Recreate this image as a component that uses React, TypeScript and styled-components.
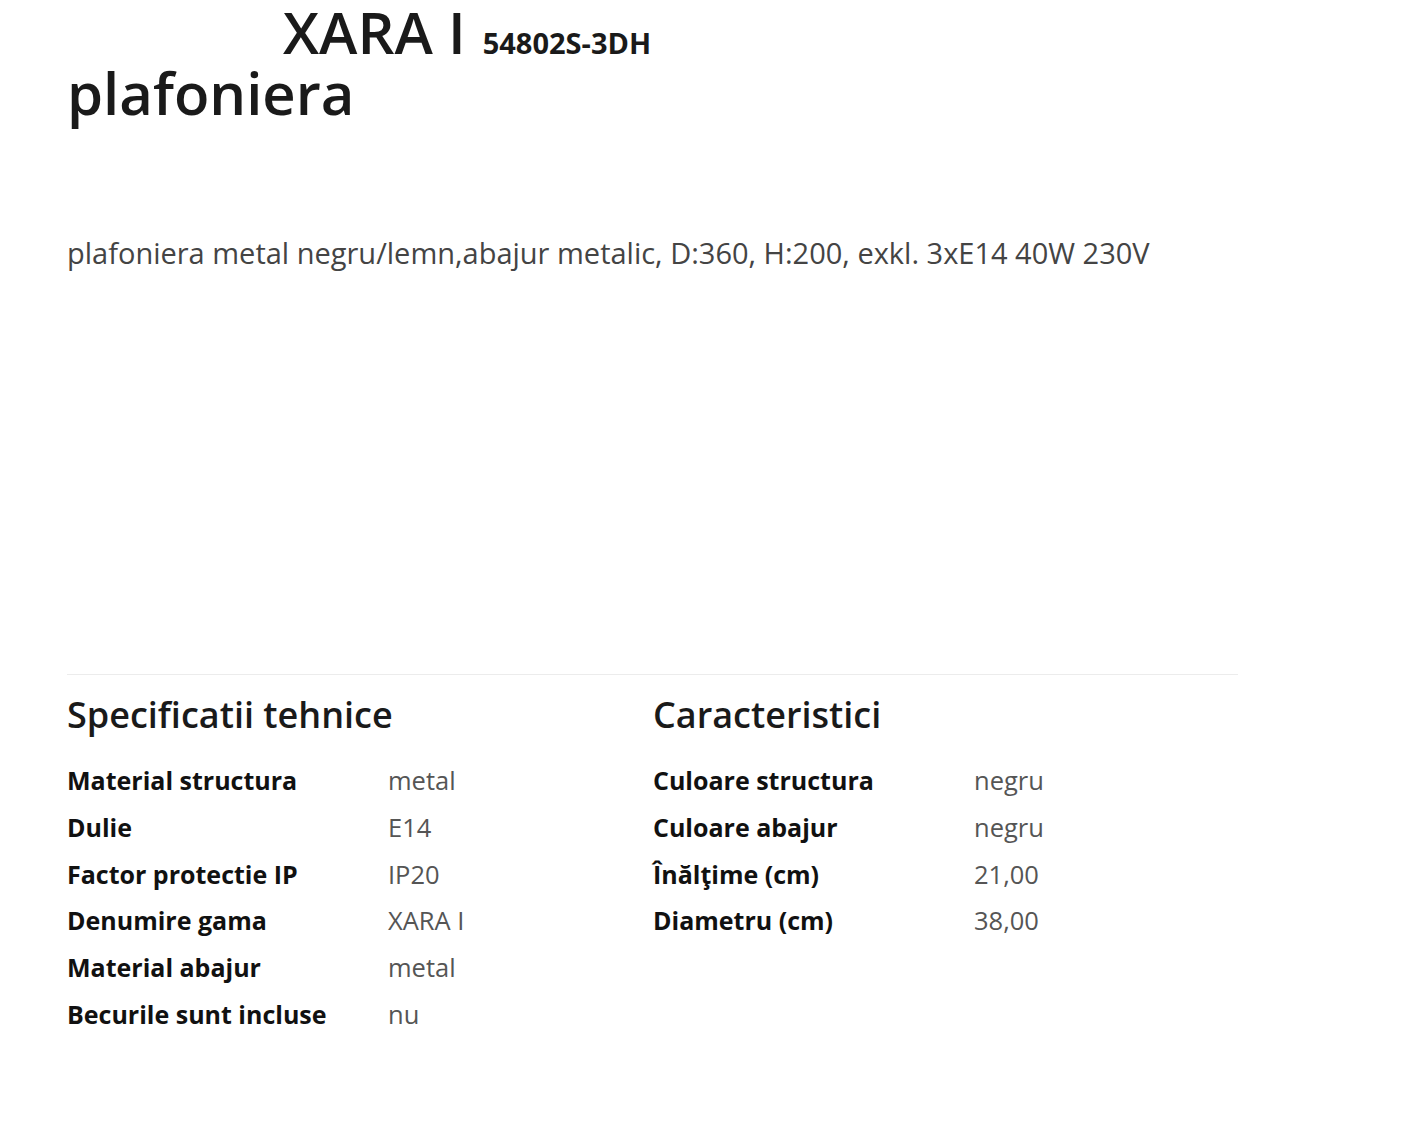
import React from 'react';
import styled, { createGlobalStyle } from 'styled-components';

type Spec = {
  label: string;
  value: string;
};

const technical: Spec[] = [
  { label: 'Material structura', value: 'metal' },
  { label: 'Dulie', value: 'E14' },
  { label: 'Factor protectie IP', value: 'IP20' },
  { label: 'Denumire gama', value: 'XARA I' },
  { label: 'Material abajur', value: 'metal' },
  { label: 'Becurile sunt incluse', value: 'nu' },
];

const features: Spec[] = [
  { label: 'Culoare structura', value: 'negru' },
  { label: 'Culoare abajur', value: 'negru' },
  { label: 'Înălţime (cm)', value: '21,00' },
  { label: 'Diametru (cm)', value: '38,00' },
];

const SpecColumn = ({ title, items }: { title: string; items: Spec[] }) => (
  <Column>
    <ColumnTitle>{title}</ColumnTitle>
    <SpecList>
      {items.map((item) => (
        <SpecRow key={item.label}>
          <Label>{item.label}</Label>
          <Value>{item.value}</Value>
        </SpecRow>
      ))}
    </SpecList>
  </Column>
);

const App = () => {
  return (
    <>
      <GlobalStyle />
      <Page>
        <Title>
          <FirstLine>
            XARA I <Code>54802S-3DH</Code>
          </FirstLine>
          plafoniera
        </Title>
        <Description>
          plafoniera metal negru/lemn,abajur metalic, D:360, H:200, exkl. 3xE14 40W 230V
        </Description>
        <Specs>
          <SpecColumn title="Specificatii tehnice" items={technical} />
          <SpecColumn title="Caracteristici" items={features} />
        </Specs>
      </Page>
    </>
  );
};

const GlobalStyle = createGlobalStyle`
  body {
    margin: 0;
    background: #fff;
    font-family: 'Open Sans', 'Liberation Sans', sans-serif;
    color: #1a1a1a;
  }
`;

const Page = styled.div`
  width: 1171px;
  margin-left: 67px;
  height: 1144px;
`;

const Title = styled.h1`
  margin: 1px 0 0;
  font-size: 58px;
  line-height: 61px;
  font-weight: 600;
  color: #1a1a1a;
`;

const FirstLine = styled.span`
  display: block;
  padding-left: 216px;
`;

const Code = styled.span`
  font-size: 29px;
  line-height: 1;
  font-weight: 700;
  margin-left: 2px;
`;

const Description = styled.p`
  margin: 110px 0 0;
  font-size: 29px;
  line-height: 40px;
  color: #444;
`;

const Specs = styled.div`
  margin-top: 401px;
  border-top: 1px solid #ececec;
  display: grid;
  grid-template-columns: 586px 1fr;
  padding-top: 16px;
`;

const Column = styled.div`
  display: flex;
  flex-direction: column;
`;

const ColumnTitle = styled.h2`
  margin: 0 0 18px;
  font-size: 36px;
  line-height: 48px;
  font-weight: 600;
  color: #1a1a1a;
`;

const SpecList = styled.div`
  display: flex;
  flex-direction: column;
`;

const SpecRow = styled.div`
  display: grid;
  grid-template-columns: 321px 1fr;
  font-size: 25px;
  line-height: 46.8px;
`;

const Label = styled.span`
  font-weight: 700;
  color: #111;
`;

const Value = styled.span`
  font-size: 25.5px;
  color: #555;
`;

export default App;
